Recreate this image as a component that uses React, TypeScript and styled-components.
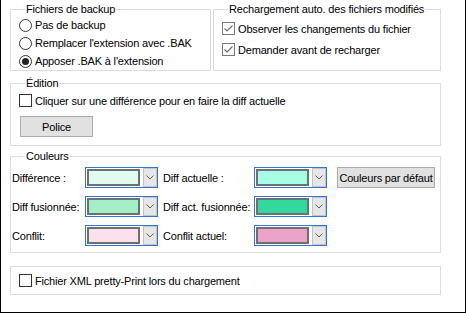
import styled, { createGlobalStyle } from "styled-components";

const GlobalStyle = createGlobalStyle`
  body {
    margin: 0;
    background: #fff;
    font-family: "Liberation Sans", Arial, sans-serif;
    font-size: 11px;
    letter-spacing: -0.18px;
    color: #000;
  }
`;

const Window = styled.div`
  box-sizing: border-box;
  width: 466px;
  height: 313px;
  border: 1px solid #000;
  border-top: none;
  padding: 2px 24px 0 9px;
  display: flex;
  flex-direction: column;
  background: #fff;
`;

const TopRow = styled.div`
  display: flex;
  gap: 2px;
`;

const Group = styled.fieldset<{ $width?: number; $top?: number }>`
  box-sizing: border-box;
  margin: ${(p) => p.$top ?? 0}px 0 0 0;
  padding: 0 8px 0 8px;
  border: 1px solid #dcdcdc;
  min-width: 0;
  width: ${(p) => (p.$width ? `${p.$width}px` : "auto")};
  display: flex;
  flex-direction: column;
`;

const Legend = styled.legend`
  margin-left: 6px;
  padding: 0 1px;
  line-height: 14px;
  font-size: 11px;
  white-space: nowrap;
`;

const Option = styled.label<{ $h: number }>`
  display: flex;
  align-items: center;
  gap: 3px;
  height: ${(p) => p.$h}px;
  white-space: nowrap;
`;

const Radio = styled.span<{ $on?: boolean }>`
  box-sizing: border-box;
  width: 13px;
  height: 13px;
  border: 1px solid #333;
  border-radius: 50%;
  display: flex;
  align-items: center;
  justify-content: center;
  flex: none;
  &::after {
    content: "";
    display: ${(p) => (p.$on ? "block" : "none")};
    width: 7px;
    height: 7px;
    border-radius: 50%;
    background: #222;
  }
`;

const Box = styled.span<{ $on?: boolean }>`
  box-sizing: border-box;
  width: 13px;
  height: 13px;
  border: 1px solid ${(p) => (p.$on ? "#7a7a7a" : "#333")};
  background: #fff;
  display: flex;
  align-items: center;
  justify-content: center;
  flex: none;
`;

const Button = styled.div<{ $w: number }>`
  box-sizing: border-box;
  width: ${(p) => p.$w}px;
  height: 21px;
  border: 1px solid #adadad;
  background: #e1e1e1;
  display: flex;
  align-items: center;
  justify-content: center;
  white-space: nowrap;
`;

const PoliceButton = styled(Button)`
  margin: 5px 0 8px 1px;
`;

const ColorGrid = styled.div`
  display: grid;
  grid-template-columns: 73px 73px 96px 73px 1fr;
  grid-auto-rows: 21px;
  row-gap: 8px;
  align-items: center;
  margin: 4px -7px 6px -7px;
`;

const ColorLabel = styled.span<{ $pad?: number }>`
  padding-left: ${(p) => p.$pad ?? 0}px;
  white-space: nowrap;
`;

const Combo = styled.div`
  box-sizing: border-box;
  width: 73px;
  height: 21px;
  border: 1px solid #2f76d4;
  display: flex;
  align-items: stretch;
  gap: 3px;
`;

const Swatch = styled.div<{ $color: string }>`
  box-sizing: border-box;
  width: 53px;
  margin: 1px 0 1px 1px;
  border: 2px solid #6f6f6f;
  background: ${(p) => p.$color};
`;

const DropArrow = styled.div`
  box-sizing: border-box;
  width: 14px;
  border: 1px solid #c4c4c4;
  background: #e6e6e6;
  display: flex;
  align-items: center;
  justify-content: center;
`;

const DefaultsButton = styled(Button)`
  justify-self: end;
  margin-right: 4px;
`;

const Spacer = styled.div<{ $h: number }>`
  height: ${(p) => p.$h}px;
`;

const PlainBox = styled.div`
  box-sizing: border-box;
  margin-top: 13px;
  height: 29px;
  border: 1px solid #dcdcdc;
  padding: 0 8px;
  display: flex;
  align-items: center;
`;

function Check() {
  return (
    <svg width="11" height="11" viewBox="0 0 11 11">
      <polyline
        points="1.5,5.5 4,8 9.5,2.5"
        fill="none"
        stroke="#6a6a6a"
        strokeWidth="1.1"
      />
    </svg>
  );
}

function Chevron() {
  return (
    <svg width="8" height="5" viewBox="0 0 8 5">
      <polyline
        points="0.5,0.5 4,4 7.5,0.5"
        fill="none"
        stroke="#606060"
        strokeWidth="1"
      />
    </svg>
  );
}

function ColorCombo({ color }: { color: string }) {
  return (
    <Combo>
      <Swatch $color={color} />
      <DropArrow>
        <Chevron />
      </DropArrow>
    </Combo>
  );
}

export default function App() {
  return (
    <>
      <GlobalStyle />
      <Window>
        <TopRow>
          <Group $width={201}>
            <Legend>Fichiers de backup</Legend>
            <Option $h={18}>
              <Radio />
              Pas de backup
            </Option>
            <Option $h={18}>
              <Radio />
              Remplacer l'extension avec .BAK
            </Option>
            <Option $h={18}>
              <Radio $on />
              Apposer .BAK à l'extension
            </Option>
          </Group>
          <Group $width={228}>
            <Legend>Rechargement auto. des fichiers modifiés</Legend>
            <Spacer $h={2} />
            <Option $h={21}>
              <Box $on>
                <Check />
              </Box>
              Observer les changements du fichier
            </Option>
            <Option $h={21}>
              <Box $on>
                <Check />
              </Box>
              Demander avant de recharger
            </Option>
          </Group>
        </TopRow>

        <Group $top={5}>
          <Legend>Édition</Legend>
          <Option $h={21}>
            <Box />
            Cliquer sur une différence pour en faire la diff actuelle
          </Option>
          <PoliceButton $w={73}>Police</PoliceButton>
        </Group>

        <Group $top={3}>
          <Legend>Couleurs</Legend>
          <ColorGrid>
            <ColorLabel>Différence :</ColorLabel>
            <ColorCombo color="#e2fbef" />
            <ColorLabel $pad={5}>Diff actuelle :</ColorLabel>
            <ColorCombo color="#a6ffe4" />
            <DefaultsButton $w={98}>Couleurs par défaut</DefaultsButton>

            <ColorLabel>Diff fusionnée:</ColorLabel>
            <ColorCombo color="#a5efc8" />
            <ColorLabel $pad={5}>Diff act. fusionnée:</ColorLabel>
            <ColorCombo color="#33d99c" />
            <span />

            <ColorLabel>Conflit:</ColorLabel>
            <ColorCombo color="#fbe1ee" />
            <ColorLabel $pad={5}>Conflit actuel:</ColorLabel>
            <ColorCombo color="#eba3c9" />
            <span />
          </ColorGrid>
        </Group>

        <PlainBox>
          <Option $h={21}>
            <Box />
            Fichier XML pretty-Print lors du chargement
          </Option>
        </PlainBox>
      </Window>
    </>
  );
}
